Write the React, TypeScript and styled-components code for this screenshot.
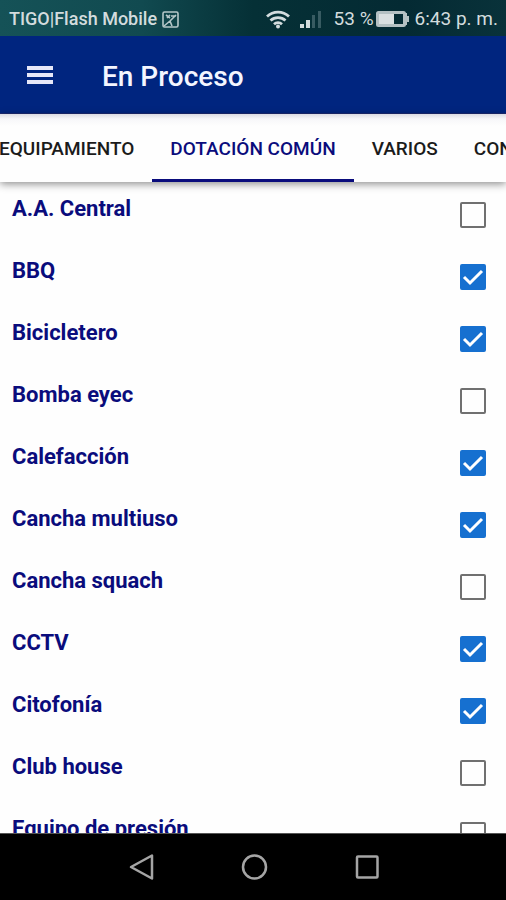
import React, { useLayoutEffect, useRef, useState } from "react";
import styled, { createGlobalStyle } from "styled-components";

const GlobalStyle = createGlobalStyle`
  *, *::before, *::after { box-sizing: border-box; }
  body { margin: 0; font-family: Roboto, "Liberation Sans", sans-serif; background: #fefefe; }
  button { font: inherit; border: 0; background: none; padding: 0; cursor: pointer; }
`;

const navy = "#0a0c7c";

const Screen = styled.div`
  display: flex;
  flex-direction: column;
  height: 100vh;
  overflow: hidden;
`;

const StatusBar = styled.div`
  flex: none;
  display: flex;
  align-items: center;
  justify-content: space-between;
  height: 36px;
  padding: 2px 8px 0 9px;
  background: linear-gradient(90deg, #155257 0%, #114a50 28%, #053036 50%, #042a33 80%, #09323a 100%);
  color: #d3dcde;
  font-size: 18px;
  font-weight: 500;
  line-height: 24px;
  white-space: nowrap;
`;

const StatusGroup = styled.div`
  display: flex;
  align-items: center;
`;

const Carrier = styled.span`
  margin-right: 5px;
`;

const Battery = styled.span`
  display: flex;
  align-items: center;
  gap: 2px;
  margin: 0 5px 0 12px;
  font-size: 19px;
  font-weight: 400;
`;

const Clock = styled.time`
  font-size: 19px;
  font-weight: 400;
`;

const WifiIcon = styled.svg`
  margin-right: 10px;
`;

const AppBar = styled.header`
  flex: none;
  display: flex;
  align-items: center;
  gap: 48px;
  height: 78px;
  padding: 0 26px;
  background: #00257f;
  color: #f4f6ff;
  border-bottom: 1px solid #1c2a72;
`;

const MenuButton = styled.button`
  display: flex;
  color: #e6e8f8;
`;

const Title = styled.h1`
  margin: 0;
  padding-top: 4px;
  font-size: 28px;
  font-weight: 500;
  line-height: 36px;
`;

const TabStrip = styled.nav`
  flex: none;
  position: relative;
  z-index: 1;
  display: flex;
  height: 68px;
  overflow: hidden;
  background: linear-gradient(#dcdce2 0, #f7f7f9 5px, #fefefe 12px);
  box-shadow: 0 2px 8px rgba(0, 0, 0, 0.45);
`;

const Tab = styled.button<{ $active: boolean }>`
  flex: none;
  padding: 5px 18px 0;
  border-bottom: 3px solid ${(p) => (p.$active ? navy : "transparent")};
  color: ${(p) => (p.$active ? navy : "#1b1b1b")};
  font-size: 19px;
  font-weight: 500;
  line-height: 24px;
  white-space: nowrap;
`;

const List = styled.ul`
  flex: 1;
  min-height: 0;
  margin: 0;
  padding: 12px 0 0;
  overflow: hidden;
  list-style: none;
  background: #fefefe;
`;

const Row = styled.label`
  display: flex;
  align-items: flex-start;
  justify-content: space-between;
  height: 62px;
  padding: 0 20px 0 12px;
  color: ${navy};
  font-size: 22px;
  font-weight: 700;
  line-height: 30px;
  cursor: pointer;
`;

const CheckCell = styled.span`
  display: grid;
  margin-top: 8px;

  & > * { grid-area: 1 / 1; }
`;

const CheckInput = styled.input`
  appearance: none;
  width: 26px;
  height: 26px;
  margin: 0;
  border: 2px solid #707070;
  border-radius: 2px;
  cursor: pointer;

  &:checked { border-color: #1670d0; background: #1670d0; }
`;

const CheckMark = styled.svg`
  pointer-events: none;
`;

const SystemNav = styled.nav`
  flex: none;
  display: flex;
  justify-content: center;
  align-items: center;
  gap: 86px;
  height: 67px;
  padding-left: 2px;
  border-top: 1px solid #555;
  background: #000;
  color: #a5a5a5;
`;

const NavButton = styled.button`
  display: flex;
  color: inherit;
`;

const tabs = ["EQUIPAMIENTO", "DOTACIÓN COMÚN", "VARIOS", "CONTACTO"];

const amenities: [string, boolean][] = [
  ["A.A. Central", false],
  ["BBQ", true],
  ["Bicicletero", true],
  ["Bomba eyec", false],
  ["Calefacción", true],
  ["Cancha multiuso", true],
  ["Cancha squach", false],
  ["CCTV", true],
  ["Citofonía", true],
  ["Club house", false],
  ["Equipo de presión", false],
];

function AmenityRow({ name, initial }: { name: string; initial: boolean }) {
  const [checked, setChecked] = useState(initial);
  return (
    <li>
      <Row>
        {name}
        <CheckCell>
          <CheckInput type="checkbox" checked={checked} onChange={() => setChecked(!checked)} />
          {checked && (
            <CheckMark width="26" height="26" viewBox="0 0 26 26" fill="none" stroke="#fff" strokeWidth="3" aria-hidden="true">
              <path d="M4 13l6 6L22 7" />
            </CheckMark>
          )}
        </CheckCell>
      </Row>
    </li>
  );
}

export default function App() {
  const [active, setActive] = useState(1);
  const strip = useRef<HTMLElement>(null);

  // Keep the selected tab centred in the scrolling strip.
  useLayoutEffect(() => {
    const el = strip.current;
    const tab = el?.children[active] as HTMLElement | undefined;
    if (el && tab) el.scrollLeft = tab.offsetLeft + tab.offsetWidth / 2 - el.clientWidth / 2;
  }, [active]);

  return (
    <Screen>
      <GlobalStyle />
      <StatusBar>
        <StatusGroup>
          <Carrier>TIGO|Flash Mobile</Carrier>
          <svg width="17" height="17" viewBox="0 0 17 17" fill="none" stroke="#b5c7c9" strokeWidth="1.6" aria-hidden="true">
            <rect x="1" y="1" width="15" height="15" rx="1.5" />
            <path d="M2 15l6-5 6-6M10 15l-2-5M4 4l4 3M8 4l-3 3M9 5h5" />
          </svg>
        </StatusGroup>
        <StatusGroup>
          <WifiIcon width="24" height="19" viewBox="0 0 24 19" fill="none" stroke="#d3dcde" strokeWidth="2.8" aria-hidden="true">
            <path d="M1 6.5a16 16 0 0 1 22 0M4.5 10.5a11 11 0 0 1 15 0M8 14.3a6 6 0 0 1 8 0" />
            <circle cx="12" cy="16.5" r="2" fill="#d3dcde" stroke="none" />
          </WifiIcon>
          <svg width="22" height="19" viewBox="0 0 22 19" aria-hidden="true">
            <path d="M0 14h4v4H0zM6 10h4v8H6z" fill="#d3dcde" />
            <path d="M12 5h3v13h-3zM18 1h3v17h-3z" fill="#385b62" />
          </svg>
          <Battery>
            53 %
            <svg width="34" height="18" viewBox="0 0 34 18" aria-hidden="true">
              <rect x="1.5" y="2.5" width="27" height="13" rx="1" fill="none" stroke="#b4c0c3" strokeWidth="3" />
              <path d="M3 4h15v10H3z" fill="#d9dfe1" />
              <path d="M29 3h2v3h2v6h-2v3h-2z" fill="#b4c0c3" />
            </svg>
          </Battery>
          <Clock>6:43 p. m.</Clock>
        </StatusGroup>
      </StatusBar>

      <AppBar>
        <MenuButton type="button" aria-label="Menú">
          <svg width="28" height="20" viewBox="0 0 28 20" fill="currentColor" aria-hidden="true">
            <path d="M1 1h26v4H1zM1 8h26v4H1zM1 15h26v4H1z" />
          </svg>
        </MenuButton>
        <Title>En Proceso</Title>
      </AppBar>

      <TabStrip ref={strip}>
        {tabs.map((label, i) => (
          <Tab key={label} type="button" $active={i === active} onClick={() => setActive(i)}>
            {label}
          </Tab>
        ))}
      </TabStrip>

      <List>
        {amenities.map(([name, on]) => (
          <AmenityRow key={name} name={name} initial={on} />
        ))}
      </List>

      <SystemNav>
        <NavButton type="button" aria-label="Atrás">
          <svg width="27" height="28" viewBox="0 0 27 28" fill="none" stroke="currentColor" strokeWidth="2.5" strokeLinejoin="round" aria-hidden="true">
            <path d="M24 2.5v23L3 14z" />
          </svg>
        </NavButton>
        <NavButton type="button" aria-label="Inicio">
          <svg width="27" height="28" viewBox="0 0 27 28" fill="none" stroke="currentColor" strokeWidth="2.5" aria-hidden="true">
            <circle cx="13.5" cy="14" r="11.5" />
          </svg>
        </NavButton>
        <NavButton type="button" aria-label="Recientes">
          <svg width="27" height="28" viewBox="0 0 27 28" fill="none" stroke="currentColor" strokeWidth="2.5" aria-hidden="true">
            <rect x="3" y="3.5" width="20.5" height="21" rx="1" />
          </svg>
        </NavButton>
      </SystemNav>
    </Screen>
  );
}
